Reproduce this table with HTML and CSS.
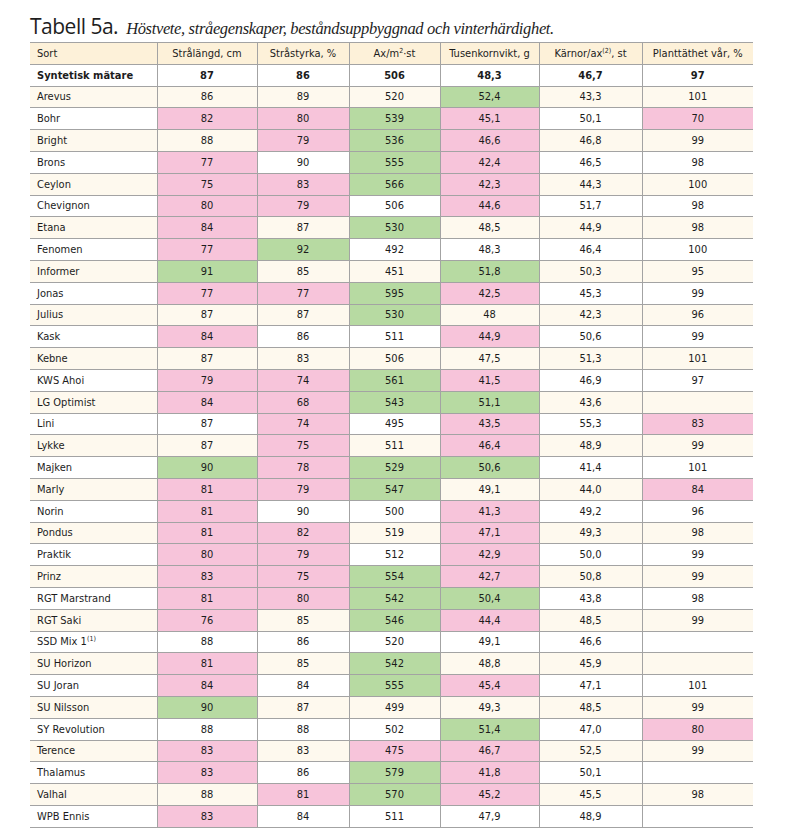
FILE: index.html
```html
<!DOCTYPE html>
<html lang="sv">
<head>
<meta charset="utf-8">
<title>Tabell 5a</title>
<link rel="stylesheet" href="styles.css">
</head>
<body>
<div class="page">
  <h1 class="title"><span class="lbl">Tabell 5a.</span> <em class="cap">Höstvete, stråegenskaper, beståndsuppbyggnad och vinterhärdighet.</em></h1>
  <table class="data">
    <colgroup>
      <col class="c1"><col class="c2"><col class="c3"><col class="c4"><col class="c5"><col class="c6"><col class="c7">
    </colgroup>
    <thead>
      <tr class="head">
        <th class="name">Sort</th>
        <th>Strålängd, cm</th>
        <th>Stråstyrka, %</th>
        <th>Ax/m<sup>2</sup>·st</th>
        <th>Tusenkornvikt, g</th>
        <th>Kärnor/ax<sup>(2)</sup>, st</th>
        <th>Planttäthet vår, %</th>
      </tr>
    </thead>
    <tbody>
      <tr class="ref"><td class="name">Syntetisk mätare</td><td>87</td><td>86</td><td>506</td><td>48,3</td><td>46,7</td><td>97</td></tr>
      <tr class="alt"><td class="name">Arevus</td><td>86</td><td>89</td><td>520</td><td class="g">52,4</td><td>43,3</td><td>101</td></tr>
      <tr><td class="name">Bohr</td><td class="p">82</td><td class="p">80</td><td class="g">539</td><td class="p">45,1</td><td>50,1</td><td class="p">70</td></tr>
      <tr class="alt"><td class="name">Bright</td><td>88</td><td class="p">79</td><td class="g">536</td><td class="p">46,6</td><td>46,8</td><td>99</td></tr>
      <tr><td class="name">Brons</td><td class="p">77</td><td>90</td><td class="g">555</td><td class="p">42,4</td><td>46,5</td><td>98</td></tr>
      <tr class="alt"><td class="name">Ceylon</td><td class="p">75</td><td class="p">83</td><td class="g">566</td><td class="p">42,3</td><td>44,3</td><td>100</td></tr>
      <tr><td class="name">Chevignon</td><td class="p">80</td><td class="p">79</td><td>506</td><td class="p">44,6</td><td>51,7</td><td>98</td></tr>
      <tr class="alt"><td class="name">Etana</td><td class="p">84</td><td>87</td><td class="g">530</td><td>48,5</td><td>44,9</td><td>98</td></tr>
      <tr><td class="name">Fenomen</td><td class="p">77</td><td class="g">92</td><td>492</td><td>48,3</td><td>46,4</td><td>100</td></tr>
      <tr class="alt"><td class="name">Informer</td><td class="g">91</td><td>85</td><td>451</td><td class="g">51,8</td><td>50,3</td><td>95</td></tr>
      <tr><td class="name">Jonas</td><td class="p">77</td><td class="p">77</td><td class="g">595</td><td class="p">42,5</td><td>45,3</td><td>99</td></tr>
      <tr class="alt"><td class="name">Julius</td><td>87</td><td>87</td><td class="g">530</td><td>48</td><td>42,3</td><td>96</td></tr>
      <tr><td class="name">Kask</td><td class="p">84</td><td>86</td><td>511</td><td class="p">44,9</td><td>50,6</td><td>99</td></tr>
      <tr class="alt"><td class="name">Kebne</td><td>87</td><td>83</td><td>506</td><td>47,5</td><td>51,3</td><td>101</td></tr>
      <tr><td class="name">KWS Ahoi</td><td class="p">79</td><td class="p">74</td><td class="g">561</td><td class="p">41,5</td><td>46,9</td><td>97</td></tr>
      <tr class="alt"><td class="name">LG Optimist</td><td class="p">84</td><td class="p">68</td><td class="g">543</td><td class="g">51,1</td><td>43,6</td><td></td></tr>
      <tr><td class="name">Lini</td><td>87</td><td class="p">74</td><td>495</td><td class="p">43,5</td><td>55,3</td><td class="p">83</td></tr>
      <tr class="alt"><td class="name">Lykke</td><td>87</td><td class="p">75</td><td>511</td><td class="p">46,4</td><td>48,9</td><td>99</td></tr>
      <tr><td class="name">Majken</td><td class="g">90</td><td class="p">78</td><td class="g">529</td><td class="g">50,6</td><td>41,4</td><td>101</td></tr>
      <tr class="alt"><td class="name">Marly</td><td class="p">81</td><td class="p">79</td><td class="g">547</td><td>49,1</td><td>44,0</td><td class="p">84</td></tr>
      <tr><td class="name">Norin</td><td class="p">81</td><td>90</td><td>500</td><td class="p">41,3</td><td>49,2</td><td>96</td></tr>
      <tr class="alt"><td class="name">Pondus</td><td class="p">81</td><td class="p">82</td><td>519</td><td class="p">47,1</td><td>49,3</td><td>98</td></tr>
      <tr><td class="name">Praktik</td><td class="p">80</td><td class="p">79</td><td>512</td><td class="p">42,9</td><td>50,0</td><td>99</td></tr>
      <tr class="alt"><td class="name">Prinz</td><td class="p">83</td><td class="p">75</td><td class="g">554</td><td class="p">42,7</td><td>50,8</td><td>99</td></tr>
      <tr><td class="name">RGT Marstrand</td><td class="p">81</td><td class="p">80</td><td class="g">542</td><td class="g">50,4</td><td>43,8</td><td>98</td></tr>
      <tr class="alt"><td class="name">RGT Saki</td><td class="p">76</td><td>85</td><td class="g">546</td><td class="p">44,4</td><td>48,5</td><td>99</td></tr>
      <tr><td class="name">SSD Mix 1<sup>(1)</sup></td><td>88</td><td>86</td><td>520</td><td>49,1</td><td>46,6</td><td></td></tr>
      <tr class="alt"><td class="name">SU Horizon</td><td class="p">81</td><td>85</td><td class="g">542</td><td>48,8</td><td>45,9</td><td></td></tr>
      <tr><td class="name">SU Joran</td><td class="p">84</td><td>84</td><td class="g">555</td><td class="p">45,4</td><td>47,1</td><td>101</td></tr>
      <tr class="alt"><td class="name">SU Nilsson</td><td class="g">90</td><td>87</td><td>499</td><td>49,3</td><td>48,5</td><td>99</td></tr>
      <tr><td class="name">SY Revolution</td><td>88</td><td>88</td><td>502</td><td class="g">51,4</td><td>47,0</td><td class="p">80</td></tr>
      <tr class="alt"><td class="name">Terence</td><td class="p">83</td><td>83</td><td class="p">475</td><td class="p">46,7</td><td>52,5</td><td>99</td></tr>
      <tr><td class="name">Thalamus</td><td class="p">83</td><td>86</td><td class="g">579</td><td class="p">41,8</td><td>50,1</td><td></td></tr>
      <tr class="alt"><td class="name">Valhal</td><td>88</td><td class="p">81</td><td class="g">570</td><td class="p">45,2</td><td>45,5</td><td>98</td></tr>
      <tr><td class="name">WPB Ennis</td><td class="p">83</td><td>84</td><td>511</td><td>47,9</td><td>48,9</td><td></td></tr>
    </tbody>
  </table>
</div>
</body>
</html>
```

FILE: styles.css
```css
html, body {
  margin: 0;
  padding: 0;
  background: #ffffff;
}

.page {
  padding-left: 30px;
  width: 723px;
}

.title {
  margin: 0;
  height: 42px;
  box-sizing: border-box;
  padding-top: 11px;
  font-weight: normal;
  line-height: 24px;
  white-space: nowrap;
  color: #1e1e1e;
}

.lbl {
  font-family: "Open Sans", "Liberation Sans", sans-serif;
  font-size: 21px;
  letter-spacing: -0.5px;
}

.cap {
  font-family: "Liberation Serif", serif;
  font-style: italic;
  font-size: 16.5px;
  letter-spacing: -0.35px;
}

.data {
  width: 723px;
  table-layout: fixed;
  border-collapse: collapse;
  border-top: 1px solid #a3a3a3;
  font-family: "DejaVu Sans Condensed", "DejaVu Sans", sans-serif;
  font-stretch: condensed;
  font-size: 11px;
  color: #1c1c1c;
}

.c1 { width: 127px; }
.c2 { width: 100px; }
.c3 { width: 92px; }
.c4 { width: 91px; }
.c5 { width: 99px; }
.c6 { width: 103px; }
.c7 { width: 111px; }

.data th,
.data td {
  height: 20.8px;
  padding: 0 4px;
  text-align: center;
  vertical-align: middle;
  border-bottom: 1px solid #a3a3a3;
  border-left: 1px solid #a3a3a3;
  font-weight: normal;
  white-space: nowrap;
  overflow: hidden;
}

.data th.name,
.data td.name {
  text-align: left;
  padding-left: 7px;
  border-left: none;
}

.data sup {
  font-size: 7px;
  line-height: 0;
  vertical-align: 4px;
}

.head { background: #fdf1d9; }
.alt { background: #fef9ee; }

.ref td { font-weight: bold; }

.data td.p { background: #f7c4da; }
.data td.g { background: #b7daa2; }
```
